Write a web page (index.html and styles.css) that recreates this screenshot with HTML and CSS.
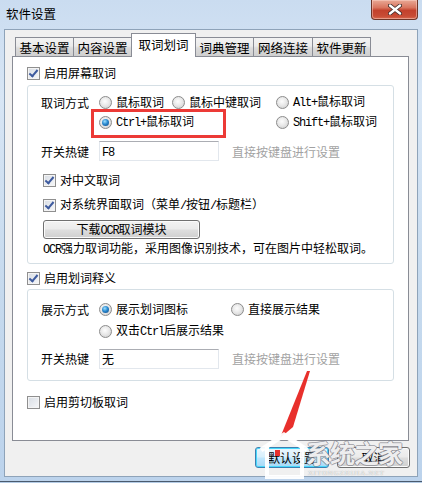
FILE: index.html
```html
<!DOCTYPE html>
<html lang="zh-CN">
<head>
    <meta charset="UTF-8">
    <title>软件设置</title>
    <link rel="stylesheet" href="styles.css">
</head>
<body>
<div class="window">
    <div class="titlebar">
        <span class="title">软件设置</span>
        <div class="close">
            <svg width="14" height="11" viewBox="0 0 14 11"><path d="M2 1.5 L12 9.5 M12 1.5 L2 9.5" stroke="#3a2a28" stroke-width="4" stroke-linecap="round"/><path d="M2 1.5 L12 9.5 M12 1.5 L2 9.5" stroke="#fff" stroke-width="2.4" stroke-linecap="round"/></svg>
        </div>
    </div>
    <div class="client">
        <div class="tabs">
            <div class="tab w59">基本设置</div>
            <div class="tab w58">内容设置</div>
            <div class="tab active">取词划词</div>
            <div class="tab w58">词典管理</div>
            <div class="tab w59">网络连接</div>
            <div class="tab w58">软件更新</div>
        </div>
        <div class="panel">
            <label class="check-row"><span class="cb on"></span><span>启用屏幕取词</span></label>
            <div class="group g1">
                <div class="opts opts1">
                    <span class="lbl">取词方式</span>
                    <span class="radio-item"><span class="rb"></span><span>鼠标取词</span></span>
                    <span class="radio-item"><span class="rb"></span><span>鼠标中键取词</span></span>
                    <span class="radio-item"><span class="rb"></span><span><span class="en">Alt+</span>鼠标取词</span></span>
                    <span></span>
                    <span class="radio-item"><span class="rb on"></span><span><span class="en">Ctrl+</span>鼠标取词</span></span>
                    <span></span>
                    <span class="radio-item"><span class="rb"></span><span><span class="en">Shift+</span>鼠标取词</span></span>
                </div>
                <div class="hotkey hk1">
                    <span class="lbl">开关热键</span>
                    <span class="input"><span class="en">F8</span></span>
                    <span class="hint">直接按键盘进行设置</span>
                </div>
                <label class="check-row sub cn"><span class="cb on"></span><span>对中文取词</span></label>
                <label class="check-row sub sys"><span class="cb on"></span><span>对系统界面取词（菜单<span class="en">/</span>按钮<span class="en">/</span>标题栏）</span></label>
                <button class="btn ocr">下载<span class="en">OCR</span>取词模块</button>
                <p class="note"><span class="en">OCR</span>强力取词功能，采用图像识别技术，可在图片中轻松取词。</p>
            </div>
            <label class="check-row r2"><span class="cb on"></span><span>启用划词释义</span></label>
            <div class="group g2">
                <div class="opts opts2">
                    <span class="lbl">展示方式</span>
                    <span class="radio-item"><span class="rb on"></span><span>展示划词图标</span></span>
                    <span class="radio-item"><span class="rb"></span><span>直接展示结果</span></span>
                    <span></span>
                    <span class="radio-item"><span class="rb"></span><span>双击<span class="en">Ctrl</span>后展示结果</span></span>
                </div>
                <div class="hotkey hk2">
                    <span class="lbl">开关热键</span>
                    <span class="input">无</span>
                    <span class="hint">直接按键盘进行设置</span>
                </div>
            </div>
            <label class="check-row r3"><span class="cb"></span><span>启用剪切板取词</span></label>
        </div>
        <div class="actions">
            <button class="btn dlg default">默认设置</button>
            <button class="btn dlg">取消</button>
        </div>
    </div>
</div>

<!-- 标注 -->
<div class="mark-box"></div>
<svg class="arrow" width="422" height="483" viewBox="0 0 422 483">
    <polygon points="310,371 307,371 280,438 293,427" fill="#e8302c"/>
    <polyline points="261,450 284,435 307,450" fill="none" stroke="#fff" stroke-width="5" opacity="0.95"/>
    <polyline points="267,447 267,477 302,477 302,447" fill="none" stroke="#fff" stroke-width="4" opacity="0.95"/>
    <rect x="275" y="450" width="5" height="6" fill="#e8302c"/>
</svg>
<div class="watermark">系统之家</div>
<div class="watermark-sub">XITONGZHIJIA.NET</div>
</body>
</html>
```

FILE: styles.css
```css
body {
    margin: 0;
    width: 422px;
    height: 483px;
    overflow: hidden;
    background: #b4cce6;
    font-family: "Noto Sans CJK SC", sans-serif;
    font-size: 12px;
    color: #000;
    position: relative;
}

.en {
    font-family: "Liberation Mono", monospace;
    letter-spacing: -1.2px;
}

.window {
    width: 414px;
    height: 481px;
    padding: 0 4px 0 4px;
    border-right: 1px solid #4a5a6e;
    border-bottom: 1px solid #4a5a6e;
    background: linear-gradient(180deg, #cadcf0 0%, #d8e6f5 20%, #c6daee 60%, #bcd3ec 100%);
}

.titlebar {
    height: 29px;
    display: flex;
    justify-content: space-between;
    align-items: flex-start;
}

.title {
    font-size: 12.5px;
    line-height: 28px;
    padding-left: 2px;
    color: #000;
}

.close {
    width: 45px;
    height: 19px;
    border: 1px solid #6e3528;
    border-top: none;
    border-radius: 0 0 4px 4px;
    background: linear-gradient(180deg, #e9a996 0%, #d9755f 40%, #c3412c 55%, #c84c35 85%, #d96a4f 100%);
    display: flex;
    justify-content: center;
    align-items: center;
    box-shadow: inset 0 0 0 1px rgba(255, 220, 210, 0.45);
}

.client {
    height: 446px;
    border: 1px solid #8ea3b9;
    background: #f0f0f0;
    padding: 0 8px 0 7px;
}

/* 选项卡 */
.tabs {
    display: flex;
    align-items: flex-end;
    height: 26px;
    padding-left: 3px;
}

.tab {
    height: 19px;
    border: 1px solid #898c95;
    border-bottom: none;
    background: linear-gradient(180deg, #f3f3f3 0%, #ebebeb 45%, #dcdcdc 55%, #cfcfcf 100%);
    font-size: 12.5px;
    line-height: 19px;
    text-align: center;
    box-sizing: border-box;
}

.tab + .tab { border-left: none; }

.w58 { width: 58px; }
.w59 { width: 59px; }

.tab.active {
    width: 65px;
    height: 24px;
    margin-left: -1px;
    margin-bottom: -1px;
    border-left: 1px solid #898c95;
    background: #fff;
    line-height: 22px;
    position: relative;
    z-index: 1;
}

.tab.active + .tab { border-left: none; }

.panel {
    height: 385px;
    box-sizing: border-box;
    border: 1px solid #898c95;
    background: #fff;
    padding: 8px 14px 0 14px;
}

/* 复选框 */
.check-row {
    display: flex;
    align-items: center;
    height: 16px;
    line-height: 16px;
    font-size: 12px;
    white-space: nowrap;
}

.cb {
    width: 11px;
    height: 11px;
    border: 1px solid #8f8f8f;
    background: linear-gradient(135deg, #d8dde4, #f6f7f9);
    box-shadow: inset 0 0 0 1px #f4f4f4;
    margin-right: 4px;
    flex: none;
    position: relative;
}

.cb.on::after {
    content: "";
    position: absolute;
    left: 3px;
    top: 0px;
    width: 3px;
    height: 7px;
    border: solid #3d5a9e;
    border-width: 0 2px 2px 0;
    transform: rotate(40deg);
}

.group {
    border: 1px solid #d5dfe5;
    border-radius: 3px;
    box-sizing: border-box;
    padding-left: 13px;
}

.g1 {
    height: 179px;
    margin-top: 4px;
    padding-top: 6px;
}

.r2 { margin-top: 6px; }

.g2 {
    height: 92px;
    margin-top: 3px;
    padding-top: 9px;
}

.r3 { margin-top: 13px; }

.lbl { font-size: 12px; }

.opts {
    display: grid;
    grid-auto-rows: 20px;
    align-items: center;
}

.opts1 { grid-template-columns: 58px 73px 104px auto; }

.opts2 {
    grid-template-columns: 58px 132px auto;
    row-gap: 2px;
}

.radio-item {
    display: flex;
    align-items: center;
    white-space: nowrap;
    font-size: 12px;
    line-height: 16px;
}

.rb {
    width: 11px;
    height: 11px;
    border-radius: 50%;
    border: 1px solid #8c8c8c;
    background: radial-gradient(circle at 45% 40%, #fdfdfd 0%, #e9e9e9 45%, #c9c9c9 100%);
    margin-right: 4px;
    flex: none;
    position: relative;
}

.rb.on::after {
    content: "";
    position: absolute;
    left: 2px;
    top: 2px;
    width: 7px;
    height: 7px;
    border-radius: 50%;
    background: radial-gradient(circle at 40% 35%, #9fe0ff 0%, #2a8ad0 45%, #0d3f7a 100%);
}

.hotkey {
    display: flex;
    align-items: center;
    height: 20px;
}

.hk1 { margin-top: 9px; }
.hk2 { margin-top: 7px; height: 21px; }

.hotkey .lbl { width: 58px; }

.input {
    width: 116px;
    height: 18px;
    border: 1px solid #e2e7ed;
    border-top-color: #abadb3;
    background: #fff;
    padding-left: 2px;
    line-height: 18px;
}

.hint {
    margin-left: 13px;
    color: #a2a2a2;
    font-size: 12px;
}

.sub { margin-left: 2px; }
.cn { margin-top: 11px; }
.sys { margin-top: 9px; }

.btn {
    font-family: "Noto Sans CJK SC", sans-serif;
    font-size: 12px;
    border: 1px solid #707070;
    border-radius: 3px;
    background: linear-gradient(180deg, #f2f2f2 0%, #ebebeb 45%, #dddddd 55%, #cfcfcf 100%);
    box-shadow: inset 0 0 0 1px #fbfbfb;
    padding: 0;
    color: #000;
}

.ocr {
    display: block;
    width: 157px;
    height: 19px;
    margin: 7px 0 0 2px;
    line-height: 16px;
}

.note {
    margin: 1px 0 0 2px;
    height: 16px;
    line-height: 16px;
    font-size: 12px;
    white-space: nowrap;
}

.actions {
    display: flex;
    justify-content: flex-end;
    gap: 8px;
    margin: 6px -1px 0 0;
}

.dlg {
    width: 73px;
    height: 21px;
}

.dlg.default {
    width: 74px;
    border-color: #3c7fb1;
    box-shadow: inset 0 0 0 1px #48d8fb;
    background: linear-gradient(180deg, #eaf6fd 0%, #d9f0fc 45%, #bee6fd 55%, #a7d9f5 100%);
}

/* 标注与水印 */
.mark-box {
    position: absolute;
    left: 91px;
    top: 109px;
    width: 129px;
    height: 23px;
    border: 3px solid #ec3a36;
}

.arrow {
    position: absolute;
    left: 0;
    top: 0;
    pointer-events: none;
}

.watermark {
    position: absolute;
    left: 306px;
    top: 437px;
    font-size: 25px;
    font-weight: bold;
    line-height: 30px;
    color: rgba(255, 255, 255, 0.9);
    text-shadow: 1px 0 rgba(110, 110, 120, 0.55), -1px 0 rgba(110, 110, 120, 0.55), 0 1px rgba(110, 110, 120, 0.55), 0 -1px rgba(110, 110, 120, 0.55);
    letter-spacing: -1px;
}

.watermark-sub {
    position: absolute;
    left: 308px;
    top: 469px;
    font-family: "Liberation Serif", serif;
    font-size: 7px;
    line-height: 8px;
    color: rgba(255, 255, 255, 0.9);
    text-shadow: 0 0 1px rgba(90, 90, 90, 0.7);
    letter-spacing: 0.8px;
}
```
